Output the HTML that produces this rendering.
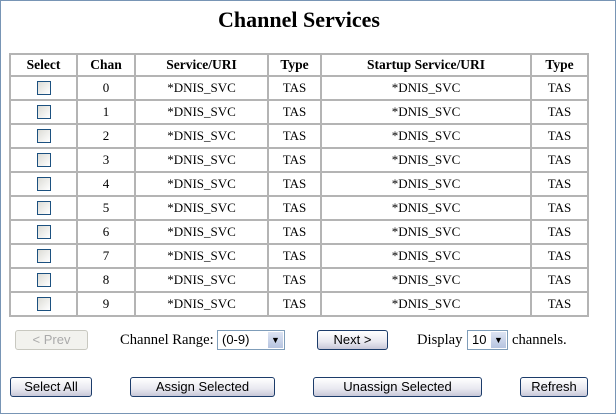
<!DOCTYPE html>
<html><head><style>
html,body{margin:0;padding:0}
body{width:614px;height:412px;border:1px solid #7895b5;background:#fff;position:relative;overflow:hidden;font-family:"Liberation Serif",serif;}
h1{position:absolute;left:0;width:596px;top:6px;margin:0;text-align:center;font-size:22px;font-weight:bold;}
table{position:absolute;left:8px;top:52px;border-collapse:separate;border-spacing:0;border:1px solid #b4b4b4;font-size:13px;}
td,th{border:1px solid #b4b4b4;text-align:center;padding:0;height:22px;}
th{height:20px;font-size:13.5px;}
.cb{display:block;margin:0 auto;position:relative;top:0px;width:12px;height:12px;border:1px solid #1c5180;background:linear-gradient(135deg,#dcdcd6,#fff);}
.btn{position:absolute;height:20px;box-sizing:border-box;border:1px solid #1c3c6a;border-radius:3px;background:linear-gradient(#fff,#e8e8f0 60%,#c8c8d8);font-family:"Liberation Sans",sans-serif;font-size:13px;text-align:center;line-height:18px;color:#000;}
.dis{border-color:#c8c8c0;background:#f2f2ee;color:#aaa;}
.lbl{position:absolute;font-size:14.6px;}
.sel{position:absolute;height:20px;box-sizing:border-box;border:1px solid #7f9db9;background:#fff;font-family:"Liberation Sans",sans-serif;font-size:13px;line-height:18px;padding-left:4px;}
.arr{position:absolute;right:1px;top:1px;width:15px;height:16px;background:linear-gradient(#dde4f3,#b6c4e0);border:0;font-size:9px;text-align:center;line-height:16px;}
</style></head><body>
<h1>Channel Services</h1>
<table>
<tr><th style="width:65px">Select</th><th style="width:56px">Chan</th><th style="width:131px">Service/URI</th><th style="width:51px">Type</th><th style="width:208px">Startup Service/URI</th><th style="width:55px">Type</th></tr>
<tr><td><span class="cb"></span></td><td>0</td><td>*DNIS_SVC</td><td>TAS</td><td>*DNIS_SVC</td><td>TAS</td></tr>
<tr><td><span class="cb"></span></td><td>1</td><td>*DNIS_SVC</td><td>TAS</td><td>*DNIS_SVC</td><td>TAS</td></tr>
<tr><td><span class="cb"></span></td><td>2</td><td>*DNIS_SVC</td><td>TAS</td><td>*DNIS_SVC</td><td>TAS</td></tr>
<tr><td><span class="cb"></span></td><td>3</td><td>*DNIS_SVC</td><td>TAS</td><td>*DNIS_SVC</td><td>TAS</td></tr>
<tr><td><span class="cb"></span></td><td>4</td><td>*DNIS_SVC</td><td>TAS</td><td>*DNIS_SVC</td><td>TAS</td></tr>
<tr><td><span class="cb"></span></td><td>5</td><td>*DNIS_SVC</td><td>TAS</td><td>*DNIS_SVC</td><td>TAS</td></tr>
<tr><td><span class="cb"></span></td><td>6</td><td>*DNIS_SVC</td><td>TAS</td><td>*DNIS_SVC</td><td>TAS</td></tr>
<tr><td><span class="cb"></span></td><td>7</td><td>*DNIS_SVC</td><td>TAS</td><td>*DNIS_SVC</td><td>TAS</td></tr>
<tr><td><span class="cb"></span></td><td>8</td><td>*DNIS_SVC</td><td>TAS</td><td>*DNIS_SVC</td><td>TAS</td></tr>
<tr><td><span class="cb"></span></td><td>9</td><td>*DNIS_SVC</td><td>TAS</td><td>*DNIS_SVC</td><td>TAS</td></tr>
</table>
<div class="btn dis" style="left:14px;top:329px;width:73px;">&lt; Prev</div>
<div class="lbl" style="left:119px;top:331px;">Channel Range:</div>
<div class="sel" style="left:216px;top:329px;width:68px;">(0-9)<div class="arr">&#9660;</div></div>
<div class="btn" style="left:316px;top:329px;width:71px;">Next &gt;</div>
<div class="lbl" style="left:416px;top:331px;">Display</div>
<div class="sel" style="left:466px;top:329px;width:41px;">10<div class="arr">&#9660;</div></div>
<div class="lbl" style="left:511px;top:331px;">channels.</div>
<div class="btn" style="left:9px;top:376px;width:82px;">Select All</div>
<div class="btn" style="left:129px;top:376px;width:145px;">Assign Selected</div>
<div class="btn" style="left:312px;top:376px;width:169px;">Unassign Selected</div>
<div class="btn" style="left:519px;top:376px;width:68px;">Refresh</div>
</body></html>
